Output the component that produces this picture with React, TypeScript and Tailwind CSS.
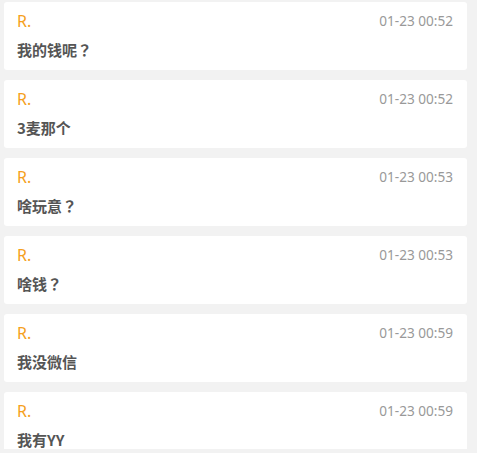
import React from "react";

const items = [
  { t: "01-23 00:52", m: "我的钱呢？" },
  { t: "01-23 00:52", m: "3麦那个" },
  { t: "01-23 00:53", m: "啥玩意？" },
  { t: "01-23 00:53", m: "啥钱？" },
  { t: "01-23 00:59", m: "我没微信" },
  { t: "01-23 00:59", m: "我有YY" },
];

export default function App() {
  return (
    <div
      className="w-[477px] h-[453px] overflow-hidden bg-[#f2f2f2]"
      style={{ fontFamily: '"Noto Sans", "Noto Sans CJK SC", sans-serif' }}
    >
      <div className="h-[449px] overflow-hidden pl-[4px] pr-[10px] pt-[2px] flex flex-col gap-[10px]">
        {items.map((it, i) => (
          <div
            key={i}
            className="shrink-0 h-[68px] bg-white rounded-[3px] pl-[13px] pr-[14px] pt-[8px] flex flex-col"
          >
            <div className="flex justify-between items-center h-[22px]">
              <span className="text-[16px] text-[#f5a020]">R.</span>
              <span className="text-[13.6px] text-[#999999]">{it.t}</span>
            </div>
            <div
              lang="zh-TW"
              className="mt-[7px] text-[15px] font-bold text-[#555555] leading-[22px]"
              style={{ fontFamily: '"Noto Sans CJK TC", sans-serif' }}
            >
              {it.m}
            </div>
          </div>
        ))}
      </div>
    </div>
  );
}
